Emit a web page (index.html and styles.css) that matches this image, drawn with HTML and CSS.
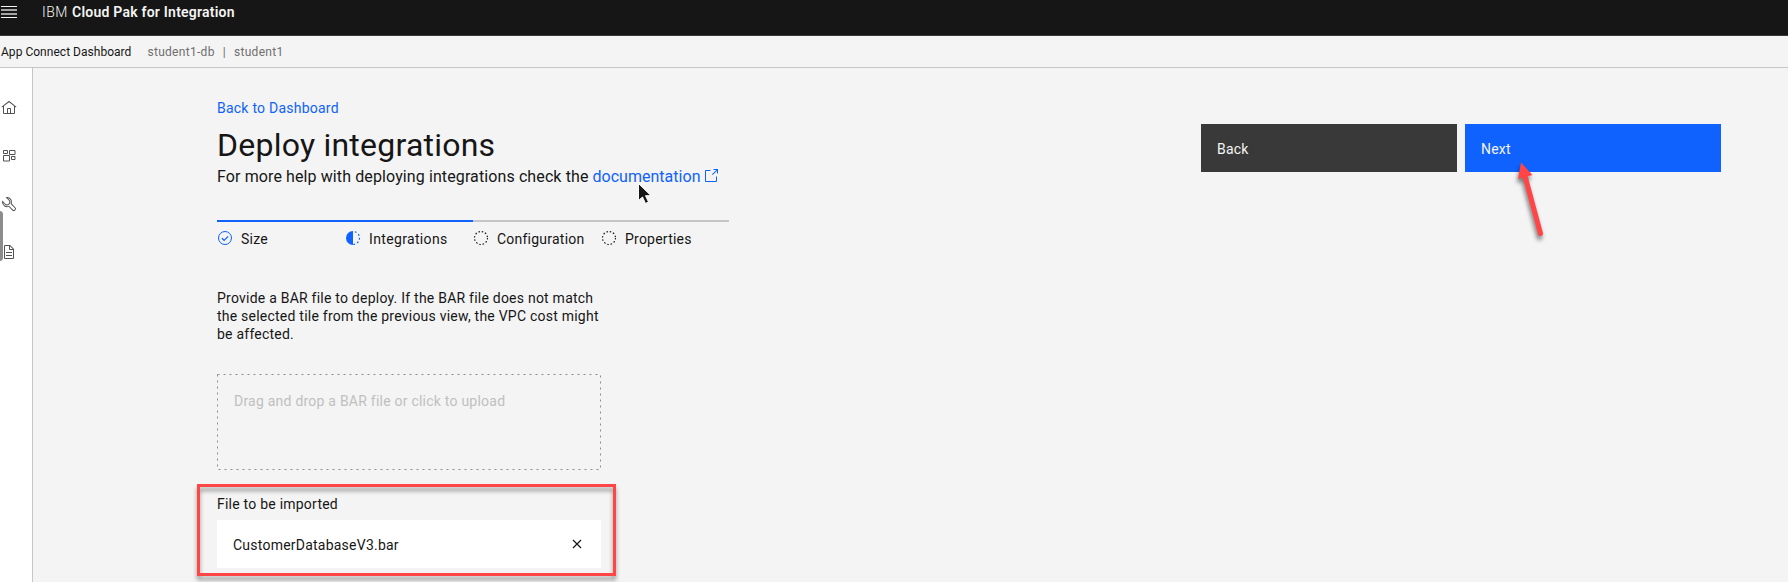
FILE: index.html
```html
<!DOCTYPE html>
<html lang="en">
<head>
<meta charset="utf-8">
<title>App Connect Dashboard</title>
<link rel="stylesheet" href="styles.css">
</head>
<body>
<header class="topbar">
  <svg class="menu" width="16" height="12" viewBox="0 0 16 12"><path fill="#f4f4f4" d="M0 0h16v1H0zM0 11h16v1H0z"/><path fill="#a3a3a3" d="M0 3h16v2H0zM0 7h16v2H0z"/></svg>
  <div class="brand"><span class="ibm">IBM</span><b class="product">Cloud Pak for Integration</b></div>
</header>
<div class="subbar">
  <span class="app">App Connect Dashboard</span>
  <span class="crumb crumb-db">student1-db</span>
  <span class="crumb-sep">|</span>
  <span class="crumb">student1</span>
</div>
<div class="shell">
  <nav class="rail">
    <svg width="16" height="16" viewBox="0 0 32 32"><path d="M16.600 2.200a1 1 0 0 0-1.200 0L1 13.400 2.300 15 4 13.600V26a2 2 0 0 0 2 2h20a2 2 0 0 0 2-2V13.600l1.800 1.400 1.200-1.600zM18 26h-4v-8h4zm2 0v-8a2 2 0 0 0-2-2h-4a2 2 0 0 0-2 2v8H6V12.100l10-7.800 10 7.800V26z"/></svg>
    <svg width="16" height="16" viewBox="0 0 32 32"><path fill="none" stroke="#525252" stroke-width="2" d="M5 5h8v6H5zM17 5h11v8H17zM5 15h12v11H5zM21 17h7v6h-7z"/></svg>
    <svg width="16" height="16" viewBox="0 0 32 32"><path d="M12.100 2a10 10 0 0 0-3 .5l6.200 6.200a4.600 4.600 0 0 1-6.600 6.600L2.500 9.100A10 10 0 0 0 2 12.100a10.100 10.100 0 0 0 13.500 9.500l7.300 7.300a3.800 3.800 0 0 0 5.400 0l.7-.7a3.800 3.800 0 0 0 0-5.400l-7.300-7.300A10.100 10.100 0 0 0 12.100 2zm0 2a8.100 8.100 0 0 1 7.200 11.800l8.200 8.400a1.900 1.900 0 0 1 0 2.600l-.7.700a1.900 1.900 0 0 1-2.600 0L16 19.300A8.100 8.100 0 0 1 4 13.500l3.300 3.200a6.600 6.600 0 0 0 9.400-9.400L13.400 4z"/></svg>
    <svg width="16" height="16" viewBox="0 0 32 32"><path d="M25.700 9.300l-7-7A1 1 0 0 0 18 2H8a2 2 0 0 0-2 2v24a2 2 0 0 0 2 2h16a2 2 0 0 0 2-2V10a1 1 0 0 0-.3-.7zM18 4.400l5.600 5.600H18zM24 28H8V4h8v6a2 2 0 0 0 2 2h6zM10 22h12v2H10zM10 16h12v2H10z"/></svg>
    <span class="thumb"></span>
  </nav>
  <main class="main">
    <section class="content">
      <a class="backlink">Back to Dashboard</a>
      <h1 class="title">Deploy integrations</h1>
      <p class="help"><span class="help-text">For more help with deploying integrations check the</span><a class="doc">documentation</a><svg class="launch" width="16" height="16" viewBox="0 0 32 32"><path fill="#0f62fe" d="M26 28H6a2 2 0 0 1-2-2V6a2 2 0 0 1 2-2h9v2H6v20h20v-9h2v9a2 2 0 0 1-2 2zM21 2v2h5.600L18 12.600l1.400 1.400L28 5.400V11h2V2z"/></svg></p>
      <ol class="steps">
        <li class="step done"><svg width="16" height="16" viewBox="0 0 16 16"><circle cx="8" cy="8" r="6.500" fill="none" stroke="#0f62fe"/><path fill="none" stroke="#0f62fe" stroke-width="1.200" d="M4.900 8.200l2.200 2.100 4-4"/></svg><span>Size</span></li>
        <li class="step done"><svg width="16" height="16" viewBox="0 0 16 16"><path fill="#0f62fe" d="M8 1a7 7 0 0 0 0 14z"/><path fill="none" stroke="#0f62fe" stroke-width="1.200" stroke-dasharray="1.800 2.200" stroke-dashoffset="-1.800" d="M8 1.500a6.500 6.500 0 0 1 0 13"/></svg><span class="current">Integrations</span></li>
        <li class="step"><svg width="16" height="16" viewBox="0 0 16 16"><circle class="dots" cx="8" cy="8" r="6.500"/></svg><span>Configuration</span></li>
        <li class="step"><svg width="16" height="16" viewBox="0 0 16 16"><circle class="dots" cx="8" cy="8" r="6.500"/></svg><span>Properties</span></li>
      </ol>
      <p class="intro">Provide a BAR file to deploy. If the BAR file does not match<br>the selected tile from the previous view, the VPC cost might<br>be affected.</p>
      <div class="drop"><svg class="drop-edge" width="384" height="96"><rect x=".5" y=".5" width="383" height="95"/></svg><span>Drag and drop a BAR file or click to upload</span></div>
      <div class="import">
        <div class="import-label">File to be imported</div>
        <div class="file"><span class="file-name">CustomerDatabaseV3.bar</span><svg width="16" height="16" viewBox="0 0 16 16"><path fill="none" stroke="#161616" stroke-width="1.200" d="M4 4l8 8M12 4l-8 8"/></svg></div>
        <div class="mark"></div>
      </div>
    </section>
    <div class="actions">
      <button class="btn secondary">Back</button>
      <button class="btn primary">Next</button>
    </div>
  </main>
</div>
<svg class="overlay" width="1788" height="582" viewBox="0 0 1788 582">
  <g class="arrow"><path class="arrow-line" d="M1525 176L1540.500 233.500"/><path class="arrow-head" d="M1521 162.500L1532.500 175 1518 179z"/></g>
  <path class="cursor" d="M638.500 183.500v17l4-3.500 3 6.500 3-1.500-3-6.300h5.500z"/>
</svg>
</body>
</html>
```
FILE: styles.css
```css
* { box-sizing: border-box; }
html { overflow: hidden; }
body { margin: 0; height: 582px; overflow: hidden; background: #f4f4f4; color: #161616; font: 14px/18px Roboto, "Liberation Sans", sans-serif; letter-spacing: .23px; position: relative; }
p, h1, ol { margin: 0; padding: 0; }
span, a, b, p { white-space: nowrap; }
.topbar { height: 36px; background: #161616; border-bottom: 1px solid #393939; display: flex; color: #f4f4f4; padding: 0 0 0 1px; }
.menu { margin-top: 6px; }
.brand { display: flex; gap: 4px; margin-left: 25px; padding-top: 2px; line-height: 20px; }
.ibm { font-weight: 300; letter-spacing: .52px; }
.product { font-weight: 600; }
.subbar { height: 32px; border-bottom: 1px solid #c6c6c6; display: flex; padding: 7px 0 0 1px; font-size: 12px; color: #6f6f6f; letter-spacing: .3px; }
.app { color: #161616; letter-spacing: .03px; }
.crumb-db { margin-left: 16px; }
.crumb-sep { margin: 0 8px 0 8px; }
.shell { display: flex; height: 514px; }
.rail { width: 33px; flex: none; background: #fff; border-right: 1px solid #c6c6c6; display: flex; flex-direction: column; gap: 32px; padding: 32px 0 0 1px; fill: #525252; position: relative; }
.thumb { position: absolute; left: -4px; top: 143px; width: 7px; height: 50px; border-radius: 4px; background: #8c8c8c; }
.main { flex: 1; display: flex; justify-content: space-between; padding: 31px 67px 0 184px; }
.content { width: 512px; }
.backlink { display: block; color: #0f62fe; }
.title { font-size: 32px; line-height: 40px; font-weight: 400; margin-top: 8px; }
.help { display: flex; font-size: 16px; line-height: 20px; margin-top: 2px; letter-spacing: .108px; }
.doc { color: #0f62fe; margin-left: 4px; letter-spacing: .02px; }
.launch { margin: 1px 0 0 2.5px; }
.steps { list-style: none; display: grid; grid-template-columns: repeat(4, 1fr); margin-top: 33px; }
.step { border-top: 2px solid #c6c6c6; display: flex; gap: 8px; padding-top: 8px; }
.step.done { border-color: #0f62fe; }
.current { letter-spacing: .35px; }
.dots { fill: none; stroke: #161616; stroke-width: 1.200; stroke-dasharray: 1.500 1.903; }
.intro { margin-top: 41px; }
.drop { position: relative; width: 384px; height: 96px; margin-top: 31px; padding: 18px 17px; color: #c0c0c0; }
.drop-edge { position: absolute; inset: 0; fill: none; stroke: #8d8d8d; stroke-dasharray: 2 4; }
.import { position: relative; width: 384px; margin-top: 25px; }
.import-label { height: 25px; }
.file { height: 48px; background: #fff; display: flex; align-items: center; justify-content: space-between; padding: 0 16px; }
.file-name { padding-top: 2px; }
.mark { position: absolute; left: -20px; top: -11px; width: 419px; height: 92px; border: 3px solid #ff4545; filter: drop-shadow(0 4px 2px rgba(0,0,0,.4)); }
.actions { display: flex; gap: 8px; padding-top: 25px; }
.btn { width: 256px; height: 48px; border: 0; padding: 2px 16px 0; text-align: left; font: inherit; letter-spacing: inherit; color: #f4f4f4; }
.secondary { background: #393939; }
.primary { background: #0f62fe; }
.overlay { position: absolute; inset: 0; pointer-events: none; }
.arrow { filter: drop-shadow(-1px 4px 2px rgba(0,0,0,.5)); }
.arrow-line { stroke: #ff4545; stroke-width: 5; stroke-linecap: round; }
.arrow-head { fill: #ff4545; }
.cursor { fill: #161616; stroke: #fff; stroke-width: 1; }
```
